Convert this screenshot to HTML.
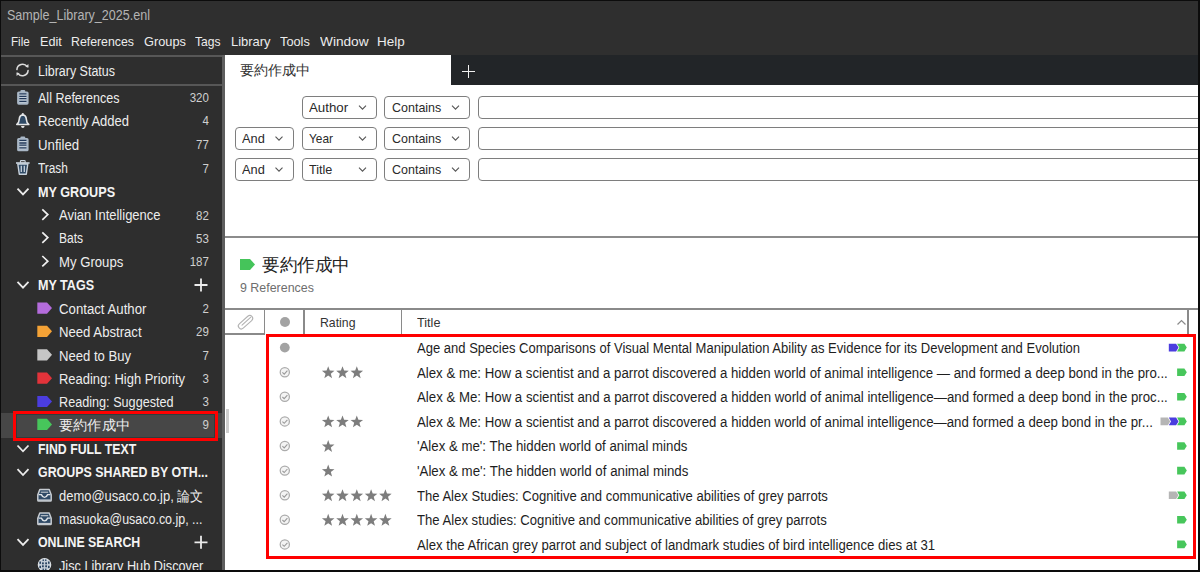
<!DOCTYPE html>
<html><head><meta charset="utf-8">
<style>
html,body{margin:0;padding:0;}
body{width:1200px;height:572px;overflow:hidden;position:relative;background:#0c0c0c;font-family:"Liberation Sans",sans-serif;}
.a{position:absolute;}
.t{position:absolute;white-space:pre;transform-origin:left center;font-family:"Liberation Sans",sans-serif;}
.dd{position:absolute;box-sizing:border-box;border:1.5px solid #7e7e7e;border-radius:4px;background:#fff;height:23px;}
.chev{position:absolute;width:5px;height:5px;border-right:1.2px solid #555;border-bottom:1.2px solid #555;transform:rotate(45deg);}
.tag{position:absolute;}
</style></head><body>
<!-- title + menu -->
<div class="a" style="left:1px;top:1px;width:1197px;height:54px;background:#2f2f2f;"></div>
<!-- sidebar -->
<div class="a" style="left:1px;top:55px;width:224px;height:515px;background:#2e2e2e;"></div>
<div class="a" style="left:1px;top:55px;width:221px;height:2px;background:#575757;"></div>
<div class="a" style="left:1px;top:84px;width:221px;height:2px;background:#575757;"></div>
<div class="a" style="left:222px;top:55px;width:3px;height:515px;background:#5e5e5e;"></div>
<!-- selected row -->
<div class="a" style="left:1px;top:413px;width:221px;height:25px;background:#474747;"></div>
<!-- main panel -->
<div class="a" style="left:225px;top:55px;width:973px;height:515px;background:#fff;"></div>
<div class="a" style="left:451px;top:55px;width:747px;height:29.5px;background:#222528;"></div>
<!-- plus in tab bar -->
<div class="a" style="left:461.8px;top:70.7px;width:13.2px;height:1.6px;background:#f0f0f0;"></div>
<div class="a" style="left:467.6px;top:64.9px;width:1.6px;height:12.8px;background:#f0f0f0;"></div>
<!-- sidebar scroll thumb -->
<div class="a" style="left:226px;top:409px;width:3px;height:24px;background:#cfcfcf;"></div>

<!-- dropdowns -->
<div class="dd" style="left:302px;top:96px;width:75px;"></div>
<div class="dd" style="left:384px;top:96px;width:86px;"></div>
<div class="dd" style="left:478px;top:96px;width:740px;"></div>
<div class="dd" style="left:235px;top:127px;width:59px;"></div>
<div class="dd" style="left:302px;top:127px;width:75px;"></div>
<div class="dd" style="left:384px;top:127px;width:86px;"></div>
<div class="dd" style="left:478px;top:127px;width:740px;"></div>
<div class="dd" style="left:235px;top:158px;width:59px;"></div>
<div class="dd" style="left:302px;top:158px;width:75px;"></div>
<div class="dd" style="left:384px;top:158px;width:86px;"></div>
<div class="dd" style="left:478px;top:158px;width:740px;"></div>

<svg class="a" style="left:0;top:0" width="1200" height="572"><path d="M359.0 105.6L362.5 109.1L366.0 105.6" fill="none" stroke="#555" stroke-width="1.1"/><path d="M452.0 105.6L455.5 109.1L459.0 105.6" fill="none" stroke="#555" stroke-width="1.1"/><path d="M359.0 136.6L362.5 140.1L366.0 136.6" fill="none" stroke="#555" stroke-width="1.1"/><path d="M452.0 136.6L455.5 140.1L459.0 136.6" fill="none" stroke="#555" stroke-width="1.1"/><path d="M275.5 136.6L279 140.1L282.5 136.6" fill="none" stroke="#555" stroke-width="1.1"/><path d="M359.0 167.6L362.5 171.1L366.0 167.6" fill="none" stroke="#555" stroke-width="1.1"/><path d="M452.0 167.6L455.5 171.1L459.0 167.6" fill="none" stroke="#555" stroke-width="1.1"/><path d="M275.5 167.6L279 171.1L282.5 167.6" fill="none" stroke="#555" stroke-width="1.1"/></svg>
<!-- separator -->
<div class="a" style="left:225px;top:236.2px;width:973px;height:2px;background:#8c8c8c;"></div>
<!-- group header tag -->
<svg class="a" style="left:240px;top:259px;" width="15" height="11"><path d="M0 0H10L15 5.5L10 11H0Z" fill="#45c45a"/></svg>

<!-- table header -->
<div class="a" style="left:225px;top:307.9px;width:973px;height:2px;background:#8a8a8a;"></div>
<div class="a" style="left:225px;top:333.2px;width:40px;height:1.6px;background:#8a8a8a;"></div>
<div class="a" style="left:263.6px;top:309px;width:1.8px;height:25px;background:#8a8a8a;"></div>
<div class="a" style="left:303.3px;top:309px;width:1.8px;height:25px;background:#8a8a8a;"></div>
<div class="a" style="left:400.6px;top:309px;width:1.8px;height:25px;background:#8a8a8a;"></div>
<div class="a" style="left:1187.2px;top:309px;width:1.8px;height:25px;background:#8a8a8a;"></div>
<svg class="a" style="left:225px;top:309px;" width="40" height="25" viewBox="225 309 40 25"><g transform="translate(245.5 322.2) rotate(-42)" fill="none" stroke="#b2b2b2" stroke-width="1.1"><rect x="-8.6" y="-2.9" width="17.2" height="5.8" rx="2.9"/><path d="M7 -0.2H-4.5" stroke-linecap="round"/></g></svg>
<div class="a" style="left:279.7px;top:317.3px;width:10px;height:10px;border-radius:50%;background:#a3a3a3;"></div>
<svg class="a" style="left:1176px;top:318px;" width="11" height="8"><path d="M1.5 6.5L5.5 2.5L9.5 6.5" fill="none" stroke="#8a8a8a" stroke-width="1.2"/></svg>

<svg class="a" style="left:225px;top:335px;" width="973" height="235" viewBox="225 335 973 235">
<circle cx="284.8" cy="347.60" r="4.9" fill="#a3a3a3"/>
<path d="M1168.80 343.80H1176.10L1178.50 347.60L1176.10 351.40H1168.80Z" fill="#4b3ddf"/>
<path d="M1177.10 343.80H1184.40L1186.80 347.60L1184.40 351.40H1177.10L1179.30 347.60Z" fill="#47c65b"/>
<circle cx="284.8" cy="372.20" r="4.6" fill="#f4f4f4" stroke="#ababab" stroke-width="1.25"/>
<path d="M282.4 372.40L284.2 374.10L287.4 370.60" fill="none" stroke="#9a9a9a" stroke-width="1.1"/>
<path d="M328.20 366.20L329.82 370.58L334.48 370.76L330.82 373.65L332.08 378.14L328.20 375.55L324.32 378.14L325.58 373.65L321.92 370.76L326.58 370.58Z" fill="#7d7d7d"/>
<path d="M342.50 366.20L344.12 370.58L348.78 370.76L345.12 373.65L346.38 378.14L342.50 375.55L338.62 378.14L339.88 373.65L336.22 370.76L340.88 370.58Z" fill="#7d7d7d"/>
<path d="M356.80 366.20L358.42 370.58L363.08 370.76L359.42 373.65L360.68 378.14L356.80 375.55L352.92 378.14L354.18 373.65L350.52 370.76L355.18 370.58Z" fill="#7d7d7d"/>
<path d="M1177.10 368.40H1184.40L1186.80 372.20L1184.40 376.00H1177.10Z" fill="#47c65b"/>
<circle cx="284.8" cy="396.80" r="4.6" fill="#f4f4f4" stroke="#ababab" stroke-width="1.25"/>
<path d="M282.4 397.00L284.2 398.70L287.4 395.20" fill="none" stroke="#9a9a9a" stroke-width="1.1"/>
<path d="M1177.10 393.00H1184.40L1186.80 396.80L1184.40 400.60H1177.10Z" fill="#47c65b"/>
<circle cx="284.8" cy="421.40" r="4.6" fill="#f4f4f4" stroke="#ababab" stroke-width="1.25"/>
<path d="M282.4 421.60L284.2 423.30L287.4 419.80" fill="none" stroke="#9a9a9a" stroke-width="1.1"/>
<path d="M328.20 415.40L329.82 419.78L334.48 419.96L330.82 422.85L332.08 427.34L328.20 424.75L324.32 427.34L325.58 422.85L321.92 419.96L326.58 419.78Z" fill="#7d7d7d"/>
<path d="M342.50 415.40L344.12 419.78L348.78 419.96L345.12 422.85L346.38 427.34L342.50 424.75L338.62 427.34L339.88 422.85L336.22 419.96L340.88 419.78Z" fill="#7d7d7d"/>
<path d="M356.80 415.40L358.42 419.78L363.08 419.96L359.42 422.85L360.68 427.34L356.80 424.75L352.92 427.34L354.18 422.85L350.52 419.96L355.18 419.78Z" fill="#7d7d7d"/>
<path d="M1160.50 417.60H1167.80L1170.20 421.40L1167.80 425.20H1160.50Z" fill="#b5b5b5"/>
<path d="M1168.80 417.60H1176.10L1178.50 421.40L1176.10 425.20H1168.80L1171.00 421.40Z" fill="#4b3ddf"/>
<path d="M1177.10 417.60H1184.40L1186.80 421.40L1184.40 425.20H1177.10L1179.30 421.40Z" fill="#47c65b"/>
<circle cx="284.8" cy="446.00" r="4.6" fill="#f4f4f4" stroke="#ababab" stroke-width="1.25"/>
<path d="M282.4 446.20L284.2 447.90L287.4 444.40" fill="none" stroke="#9a9a9a" stroke-width="1.1"/>
<path d="M328.20 440.00L329.82 444.38L334.48 444.56L330.82 447.45L332.08 451.94L328.20 449.35L324.32 451.94L325.58 447.45L321.92 444.56L326.58 444.38Z" fill="#7d7d7d"/>
<path d="M1177.10 442.20H1184.40L1186.80 446.00L1184.40 449.80H1177.10Z" fill="#47c65b"/>
<circle cx="284.8" cy="470.60" r="4.6" fill="#f4f4f4" stroke="#ababab" stroke-width="1.25"/>
<path d="M282.4 470.80L284.2 472.50L287.4 469.00" fill="none" stroke="#9a9a9a" stroke-width="1.1"/>
<path d="M328.20 464.60L329.82 468.98L334.48 469.16L330.82 472.05L332.08 476.54L328.20 473.95L324.32 476.54L325.58 472.05L321.92 469.16L326.58 468.98Z" fill="#7d7d7d"/>
<path d="M1177.10 466.80H1184.40L1186.80 470.60L1184.40 474.40H1177.10Z" fill="#47c65b"/>
<circle cx="284.8" cy="495.20" r="4.6" fill="#f4f4f4" stroke="#ababab" stroke-width="1.25"/>
<path d="M282.4 495.40L284.2 497.10L287.4 493.60" fill="none" stroke="#9a9a9a" stroke-width="1.1"/>
<path d="M328.20 489.20L329.82 493.58L334.48 493.76L330.82 496.65L332.08 501.14L328.20 498.55L324.32 501.14L325.58 496.65L321.92 493.76L326.58 493.58Z" fill="#7d7d7d"/>
<path d="M342.50 489.20L344.12 493.58L348.78 493.76L345.12 496.65L346.38 501.14L342.50 498.55L338.62 501.14L339.88 496.65L336.22 493.76L340.88 493.58Z" fill="#7d7d7d"/>
<path d="M356.80 489.20L358.42 493.58L363.08 493.76L359.42 496.65L360.68 501.14L356.80 498.55L352.92 501.14L354.18 496.65L350.52 493.76L355.18 493.58Z" fill="#7d7d7d"/>
<path d="M371.10 489.20L372.72 493.58L377.38 493.76L373.72 496.65L374.98 501.14L371.10 498.55L367.22 501.14L368.48 496.65L364.82 493.76L369.48 493.58Z" fill="#7d7d7d"/>
<path d="M385.40 489.20L387.02 493.58L391.68 493.76L388.02 496.65L389.28 501.14L385.40 498.55L381.52 501.14L382.78 496.65L379.12 493.76L383.78 493.58Z" fill="#7d7d7d"/>
<path d="M1168.80 491.40H1176.10L1178.50 495.20L1176.10 499.00H1168.80Z" fill="#b5b5b5"/>
<path d="M1177.10 491.40H1184.40L1186.80 495.20L1184.40 499.00H1177.10L1179.30 495.20Z" fill="#47c65b"/>
<circle cx="284.8" cy="519.80" r="4.6" fill="#f4f4f4" stroke="#ababab" stroke-width="1.25"/>
<path d="M282.4 520.00L284.2 521.70L287.4 518.20" fill="none" stroke="#9a9a9a" stroke-width="1.1"/>
<path d="M328.20 513.80L329.82 518.18L334.48 518.36L330.82 521.25L332.08 525.74L328.20 523.15L324.32 525.74L325.58 521.25L321.92 518.36L326.58 518.18Z" fill="#7d7d7d"/>
<path d="M342.50 513.80L344.12 518.18L348.78 518.36L345.12 521.25L346.38 525.74L342.50 523.15L338.62 525.74L339.88 521.25L336.22 518.36L340.88 518.18Z" fill="#7d7d7d"/>
<path d="M356.80 513.80L358.42 518.18L363.08 518.36L359.42 521.25L360.68 525.74L356.80 523.15L352.92 525.74L354.18 521.25L350.52 518.36L355.18 518.18Z" fill="#7d7d7d"/>
<path d="M371.10 513.80L372.72 518.18L377.38 518.36L373.72 521.25L374.98 525.74L371.10 523.15L367.22 525.74L368.48 521.25L364.82 518.36L369.48 518.18Z" fill="#7d7d7d"/>
<path d="M385.40 513.80L387.02 518.18L391.68 518.36L388.02 521.25L389.28 525.74L385.40 523.15L381.52 525.74L382.78 521.25L379.12 518.36L383.78 518.18Z" fill="#7d7d7d"/>
<path d="M1177.10 516.00H1184.40L1186.80 519.80L1184.40 523.60H1177.10Z" fill="#47c65b"/>
<circle cx="284.8" cy="544.40" r="4.6" fill="#f4f4f4" stroke="#ababab" stroke-width="1.25"/>
<path d="M282.4 544.60L284.2 546.30L287.4 542.80" fill="none" stroke="#9a9a9a" stroke-width="1.1"/>
<path d="M1177.10 540.60H1184.40L1186.80 544.40L1184.40 548.20H1177.10Z" fill="#47c65b"/>
</svg>

<svg class="a" style="left:0px;top:55px;" width="225" height="515" viewBox="0 55 225 515">
<g fill="none" stroke="#dcdcdc" stroke-width="1.5" stroke-linecap="round"><path d="M16.9 69.6 A5.7 5.7 0 0 1 27.2 66.6"/><path d="M28.1 70.4 A5.7 5.7 0 0 1 17.8 73.4"/></g><path d="M25.3 66.8 L28.6 67.6 L28.4 63.9 Z" fill="#dcdcdc"/><path d="M19.7 73.2 L16.4 72.4 L16.6 76.1 Z" fill="#dcdcdc"/>
<rect x="17.1" y="91.5" width="11.5" height="13.2" rx="1.6" fill="#a9b7c6"/><rect x="20.3" y="90.0" width="5" height="3" rx="1.2" fill="#a9b7c6"/><rect x="19.3" y="93.2" width="7.2" height="9.5" fill="#c3ced9"/><path d="M19.3 93.8H26.5M19.3 96.4H26.5M19.3 98.6H26.5M19.3 101.3H26.5" stroke="#23395a" stroke-width="1.3"/>
<rect x="17.1" y="138.1" width="11.5" height="13.2" rx="1.6" fill="#a9b7c6"/><rect x="20.3" y="136.6" width="5" height="3" rx="1.2" fill="#a9b7c6"/><rect x="19.3" y="139.8" width="7.2" height="9.5" fill="#c3ced9"/><path d="M19.3 140.4H26.5M19.3 143.0H26.5M19.3 145.2H26.5M19.3 147.9H26.5" stroke="#23395a" stroke-width="1.3"/>
<path d="M16.8 124.5Q19 123.1 19.2 119.5Q19.6 115.1 22.8 114.9Q26 115.1 26.4 119.5Q26.6 123.1 28.8 124.5Z" fill="#2f4a66" stroke="#e4e6e8" stroke-width="1.6" stroke-linejoin="round"/><path d="M21 125.9H24.6Q24.4 127.9 22.8 127.9Q21.2 127.9 21 125.9Z" fill="#e4e6e8"/><circle cx="22.8" cy="114.0" r="1.1" fill="#e4e6e8"/>
<path d="M17.8 164.0L19.3 174.2H26.3L27.8 164.0Z" fill="#2f4a66" stroke="#c9d3dd" stroke-width="1.4" stroke-linejoin="round"/><path d="M16 163.0H29.6" stroke="#c9d3dd" stroke-width="1.6"/><rect x="20.4" y="160.6" width="4.8" height="2.4" rx="0.8" fill="none" stroke="#c9d3dd" stroke-width="1.1"/><path d="M21.3 165.8V172.0M24.3 165.8V172.0" stroke="#c9d3dd" stroke-width="1.3"/>
<path d="M17.5 188.6L23 194.4L28.5 188.6" fill="none" stroke="#ececec" stroke-width="1.8"/>
<path d="M17.5 281.8L23 287.6L28.5 281.8" fill="none" stroke="#ececec" stroke-width="1.8"/>
<path d="M17.5 445.5L23 451.3L28.5 445.5" fill="none" stroke="#ececec" stroke-width="1.8"/>
<path d="M17.5 469.2L23 475.0L28.5 469.2" fill="none" stroke="#ececec" stroke-width="1.8"/>
<path d="M17.5 539.1L23 544.9L28.5 539.1" fill="none" stroke="#ececec" stroke-width="1.8"/>
<path d="M42.3 209.4L47.8 214.6L42.3 219.8" fill="none" stroke="#f0f0f0" stroke-width="1.7"/>
<path d="M42.3 232.4L47.8 237.6L42.3 242.8" fill="none" stroke="#f0f0f0" stroke-width="1.7"/>
<path d="M42.3 256.0L47.8 261.2L42.3 266.4" fill="none" stroke="#f0f0f0" stroke-width="1.7"/>
<path d="M194.5 285.0H207.5M201 278.5V291.5" stroke="#ececec" stroke-width="1.8"/>
<path d="M194.5 542.3H207.5M201 535.8V548.8" stroke="#ececec" stroke-width="1.8"/>
<path d="M37.3 302.5H47L52 308.1L47 313.7H37.3Z" fill="#b46cdc"/>
<path d="M37.3 325.7H47L52 331.3L47 336.9H37.3Z" fill="#f4a236"/>
<path d="M37.3 349.2H47L52 354.8L47 360.4H37.3Z" fill="#c6c6c6"/>
<path d="M37.3 372.6H47L52 378.2L47 383.8H37.3Z" fill="#e2333a"/>
<path d="M37.3 395.9H47L52 401.5L47 407.1H37.3Z" fill="#4b3ddf"/>
<path d="M37.3 418.8H47L52 424.4L47 430.0H37.3Z" fill="#47c65b"/>
<path d="M37.8 494.7L39.8 489.6H49.2L51.2 494.7V500.2Q51.2 501.0 50.4 501.0H38.6Q37.8 501.0 37.8 500.2Z" fill="#2f4a66" stroke="#c6cbd1" stroke-width="1.5" stroke-linejoin="round"/><path d="M38.6 494.6H41.4Q42.6 497.4 44.5 497.4Q46.4 497.4 47.6 494.6H50.4" fill="none" stroke="#dfe3e7" stroke-width="1.4"/><path d="M40.8 492.2H48.2" stroke="#c6cbd1" stroke-width="1.1"/><path d="M38.2 500.1H50.8" stroke="#c6cbd1" stroke-width="1.4"/>
<path d="M37.8 518.2L39.8 513.1H49.2L51.2 518.2V523.7Q51.2 524.5 50.4 524.5H38.6Q37.8 524.5 37.8 523.7Z" fill="#2f4a66" stroke="#c6cbd1" stroke-width="1.5" stroke-linejoin="round"/><path d="M38.6 518.1H41.4Q42.6 520.9 44.5 520.9Q46.4 520.9 47.6 518.1H50.4" fill="none" stroke="#dfe3e7" stroke-width="1.4"/><path d="M40.8 515.7H48.2" stroke="#c6cbd1" stroke-width="1.1"/><path d="M38.2 523.6H50.8" stroke="#c6cbd1" stroke-width="1.4"/>
<circle cx="44.5" cy="564.8" r="6.2" fill="#c3ccd6" stroke="#dde2e6" stroke-width="1.2"/><g fill="#2a4462"><rect x="39.4" y="561.5" width="1.6" height="2.3"/><rect x="39.4" y="565.8" width="1.6" height="2.3"/><rect x="48" y="561.5" width="1.6" height="2.3"/><rect x="48" y="565.8" width="1.6" height="2.3"/><rect x="42" y="562.4" width="1.8" height="1.9"/><rect x="45.2" y="562.4" width="1.8" height="1.9"/><rect x="42" y="565.3" width="1.8" height="1.9"/><rect x="45.2" y="565.3" width="1.8" height="1.9"/><rect x="42.6" y="559.4" width="1.3" height="1.6"/><rect x="45.1" y="559.4" width="1.3" height="1.6"/><rect x="42.6" y="568.6" width="1.3" height="1.6"/><rect x="45.1" y="568.6" width="1.3" height="1.6"/></g>
</svg>

<!-- red highlight boxes -->
<div class="a" style="left:13px;top:411px;width:205px;height:30px;box-sizing:border-box;border:3.5px solid #ff0000;box-shadow:inset 0 0 0 1px #2e3d3d;"></div>
<div class="a" style="left:266px;top:334px;width:930px;height:225px;box-sizing:border-box;border:3.3px solid #ff0000;"></div>

<div class="t" style="left:7.30px;top:8.00px;font-size:14px;line-height:14px;color:#b4b4b4;transform:scaleX(0.8962);">Sample_Library_2025.enl</div>
<div class="t" style="left:11.20px;top:35.20px;font-size:13px;line-height:13px;color:#ececec;transform:scaleX(0.8972);">File</div>
<div class="t" style="left:39.50px;top:35.20px;font-size:13px;line-height:13px;color:#ececec;transform:scaleX(0.9729);">Edit</div>
<div class="t" style="left:71.00px;top:35.20px;font-size:13px;line-height:13px;color:#ececec;transform:scaleX(0.9476);">References</div>
<div class="t" style="left:143.50px;top:35.20px;font-size:13px;line-height:13px;color:#ececec;transform:scaleX(0.9850);">Groups</div>
<div class="t" style="left:195.00px;top:35.20px;font-size:13px;line-height:13px;color:#ececec;transform:scaleX(0.9283);">Tags</div>
<div class="t" style="left:231.00px;top:35.20px;font-size:13px;line-height:13px;color:#ececec;transform:scaleX(0.9962);">Library</div>
<div class="t" style="left:280.00px;top:35.20px;font-size:13px;line-height:13px;color:#ececec;transform:scaleX(0.9816);">Tools</div>
<div class="t" style="left:319.60px;top:35.20px;font-size:13px;line-height:13px;color:#ececec;transform:scaleX(1.0508);">Window</div>
<div class="t" style="left:377.30px;top:35.20px;font-size:13px;line-height:13px;color:#ececec;transform:scaleX(1.0355);">Help</div>
<div class="t" style="left:37.50px;top:64.00px;font-size:14px;line-height:14px;color:#ededed;transform:scaleX(0.8915);">Library Status</div>
<div class="t" style="left:37.50px;top:91.00px;font-size:14px;line-height:14px;color:#ededed;transform:scaleX(0.8940);">All References</div>
<div class="t" style="left:188.44px;top:92.15px;font-size:12.5px;line-height:12.5px;color:#d0d0d0;transform:scaleX(0.9200);transform-origin:right center;">320</div>
<div class="t" style="left:37.50px;top:114.30px;font-size:14px;line-height:14px;color:#ededed;transform:scaleX(0.9278);">Recently Added</div>
<div class="t" style="left:202.35px;top:115.45px;font-size:12.5px;line-height:12.5px;color:#d0d0d0;transform:scaleX(0.9200);transform-origin:right center;">4</div>
<div class="t" style="left:37.50px;top:137.60px;font-size:14px;line-height:14px;color:#ededed;transform:scaleX(0.9451);">Unfiled</div>
<div class="t" style="left:195.39px;top:138.75px;font-size:12.5px;line-height:12.5px;color:#d0d0d0;transform:scaleX(0.9200);transform-origin:right center;">77</div>
<div class="t" style="left:37.50px;top:161.40px;font-size:14px;line-height:14px;color:#ededed;transform:scaleX(0.8475);">Trash</div>
<div class="t" style="left:202.35px;top:162.55px;font-size:12.5px;line-height:12.5px;color:#d0d0d0;transform:scaleX(0.9200);transform-origin:right center;">7</div>
<div class="t" style="left:37.50px;top:184.80px;font-size:14px;line-height:14px;color:#f4f4f4;transform:scaleX(0.9037);font-weight:bold;">MY GROUPS</div>
<div class="t" style="left:37.50px;top:278.00px;font-size:14px;line-height:14px;color:#f4f4f4;transform:scaleX(0.8976);font-weight:bold;">MY TAGS</div>
<div class="t" style="left:37.50px;top:441.70px;font-size:14px;line-height:14px;color:#f4f4f4;transform:scaleX(0.8798);font-weight:bold;">FIND FULL TEXT</div>
<div class="t" style="left:37.50px;top:465.40px;font-size:14px;line-height:14px;color:#f4f4f4;transform:scaleX(0.8859);font-weight:bold;">GROUPS SHARED BY OTH...</div>
<div class="t" style="left:37.50px;top:535.30px;font-size:14px;line-height:14px;color:#f4f4f4;transform:scaleX(0.8826);font-weight:bold;">ONLINE SEARCH</div>
<div class="t" style="left:59.00px;top:208.40px;font-size:14px;line-height:14px;color:#ededed;transform:scaleX(0.9271);">Avian Intelligence</div>
<div class="t" style="left:195.39px;top:209.55px;font-size:12.5px;line-height:12.5px;color:#d0d0d0;transform:scaleX(0.9200);transform-origin:right center;">82</div>
<div class="t" style="left:59.00px;top:231.40px;font-size:14px;line-height:14px;color:#ededed;transform:scaleX(0.8602);">Bats</div>
<div class="t" style="left:195.39px;top:232.55px;font-size:12.5px;line-height:12.5px;color:#d0d0d0;transform:scaleX(0.9200);transform-origin:right center;">53</div>
<div class="t" style="left:59.00px;top:255.00px;font-size:14px;line-height:14px;color:#ededed;transform:scaleX(0.9391);">My Groups</div>
<div class="t" style="left:188.44px;top:256.15px;font-size:12.5px;line-height:12.5px;color:#d0d0d0;transform:scaleX(0.9200);transform-origin:right center;">187</div>
<div class="t" style="left:59.00px;top:301.90px;font-size:14px;line-height:14px;color:#ededed;transform:scaleX(0.9436);">Contact Author</div>
<div class="t" style="left:202.35px;top:303.05px;font-size:12.5px;line-height:12.5px;color:#d0d0d0;transform:scaleX(0.9200);transform-origin:right center;">2</div>
<div class="t" style="left:59.00px;top:325.10px;font-size:14px;line-height:14px;color:#ededed;transform:scaleX(0.9393);">Need Abstract</div>
<div class="t" style="left:195.39px;top:326.25px;font-size:12.5px;line-height:12.5px;color:#d0d0d0;transform:scaleX(0.9200);transform-origin:right center;">29</div>
<div class="t" style="left:59.00px;top:348.60px;font-size:14px;line-height:14px;color:#ededed;transform:scaleX(0.9356);">Need to Buy</div>
<div class="t" style="left:202.35px;top:349.75px;font-size:12.5px;line-height:12.5px;color:#d0d0d0;transform:scaleX(0.9200);transform-origin:right center;">7</div>
<div class="t" style="left:59.00px;top:372.00px;font-size:14px;line-height:14px;color:#ededed;transform:scaleX(0.9253);">Reading: High Priority</div>
<div class="t" style="left:202.35px;top:373.15px;font-size:12.5px;line-height:12.5px;color:#d0d0d0;transform:scaleX(0.9200);transform-origin:right center;">3</div>
<div class="t" style="left:59.00px;top:395.30px;font-size:14px;line-height:14px;color:#ededed;transform:scaleX(0.9033);">Reading: Suggested</div>
<div class="t" style="left:202.35px;top:396.45px;font-size:12.5px;line-height:12.5px;color:#d0d0d0;transform:scaleX(0.9200);transform-origin:right center;">3</div>
<div class="t" style="left:59.00px;top:418.20px;font-size:14px;line-height:14px;color:#ededed;transform:scaleX(1.0143);">要約作成中</div>
<div class="t" style="left:202.35px;top:419.35px;font-size:12.5px;line-height:12.5px;color:#d0d0d0;transform:scaleX(0.9200);transform-origin:right center;">9</div>
<div class="t" style="left:59.00px;top:489.00px;font-size:14px;line-height:14px;color:#ededed;transform:scaleX(0.9259);">demo@usaco.co.jp, 論文</div>
<div class="t" style="left:59.00px;top:512.40px;font-size:14px;line-height:14px;color:#ededed;transform:scaleX(0.8897);">masuoka@usaco.co.jp, ...</div>
<div class="t" style="left:59.00px;top:558.50px;font-size:14px;line-height:14px;color:#ededed;transform:scaleX(0.9092);">Jisc Library Hub Discover</div>
<div class="t" style="left:240.00px;top:62.80px;font-size:14px;line-height:14px;color:#333;transform:scaleX(1.0071);">要約作成中</div>
<div class="t" style="left:308.70px;top:100.75px;font-size:13.5px;line-height:13.5px;color:#2a2a2a;transform:scaleX(0.9854);">Author</div>
<div class="t" style="left:391.70px;top:100.75px;font-size:13.5px;line-height:13.5px;color:#2a2a2a;transform:scaleX(0.9250);">Contains</div>
<div class="t" style="left:308.70px;top:131.75px;font-size:13.5px;line-height:13.5px;color:#2a2a2a;transform:scaleX(0.8797);">Year</div>
<div class="t" style="left:391.70px;top:131.75px;font-size:13.5px;line-height:13.5px;color:#2a2a2a;transform:scaleX(0.9250);">Contains</div>
<div class="t" style="left:241.70px;top:131.75px;font-size:13.5px;line-height:13.5px;color:#2a2a2a;transform:scaleX(0.9488);">And</div>
<div class="t" style="left:308.70px;top:162.75px;font-size:13.5px;line-height:13.5px;color:#2a2a2a;transform:scaleX(0.9354);">Title</div>
<div class="t" style="left:391.70px;top:162.75px;font-size:13.5px;line-height:13.5px;color:#2a2a2a;transform:scaleX(0.9250);">Contains</div>
<div class="t" style="left:241.70px;top:162.75px;font-size:13.5px;line-height:13.5px;color:#2a2a2a;transform:scaleX(0.9488);">And</div>
<div class="t" style="left:261.60px;top:256.00px;font-size:18px;line-height:18px;color:#222;transform:scaleX(0.9778);">要約作成中</div>
<div class="t" style="left:240.00px;top:280.50px;font-size:13px;line-height:13px;color:#6e6e6e;transform:scaleX(0.9557);">9 References</div>
<div class="t" style="left:319.70px;top:315.75px;font-size:13.5px;line-height:13.5px;color:#333;transform:scaleX(0.9095);">Rating</div>
<div class="t" style="left:417.00px;top:315.75px;font-size:13.5px;line-height:13.5px;color:#333;transform:scaleX(0.9394);">Title</div>
<div class="t" style="left:416.90px;top:341.00px;font-size:14px;line-height:14px;color:#1e1e1e;transform:scaleX(0.9305);">Age and Species Comparisons of Visual Mental Manipulation Ability as Evidence for its Development and Evolution</div>
<div class="t" style="left:416.90px;top:365.60px;font-size:14px;line-height:14px;color:#1e1e1e;transform:scaleX(0.9449);">Alex &amp; me: How a scientist and a parrot discovered a hidden world of animal intelligence — and formed a deep bond in the pro...</div>
<div class="t" style="left:416.90px;top:390.20px;font-size:14px;line-height:14px;color:#1e1e1e;transform:scaleX(0.9458);">Alex &amp; Me: How a scientist and a parrot discovered a hidden world of animal intelligence—and formed a deep bond in the proc...</div>
<div class="t" style="left:416.90px;top:414.80px;font-size:14px;line-height:14px;color:#1e1e1e;transform:scaleX(0.9455);">Alex &amp; Me: How a scientist and a parrot discovered a hidden world of animal intelligence—and formed a deep bond in the pr...</div>
<div class="t" style="left:416.90px;top:439.40px;font-size:14px;line-height:14px;color:#1e1e1e;transform:scaleX(0.9454);">&#x27;Alex &amp; me&#x27;: The hidden world of animal minds</div>
<div class="t" style="left:416.90px;top:464.00px;font-size:14px;line-height:14px;color:#1e1e1e;transform:scaleX(0.9489);">&#x27;Alex &amp; me&#x27;: The hidden world of animal minds</div>
<div class="t" style="left:416.90px;top:488.60px;font-size:14px;line-height:14px;color:#1e1e1e;transform:scaleX(0.9327);">The Alex Studies: Cognitive and communicative abilities of grey parrots</div>
<div class="t" style="left:416.90px;top:513.20px;font-size:14px;line-height:14px;color:#1e1e1e;transform:scaleX(0.9354);">The Alex studies: Cognitive and communicative abilities of grey parrots</div>
<div class="t" style="left:416.90px;top:537.80px;font-size:14px;line-height:14px;color:#1e1e1e;transform:scaleX(0.9403);">Alex the African grey parrot and subject of landmark studies of bird intelligence dies at 31</div>
<div class="a" style="left:1198px;top:0;width:2px;height:572px;background:#0c0c0c;"></div>
<div class="a" style="left:0;top:570px;width:1200px;height:2px;background:#0c0c0c;"></div>
<div class="a" style="left:0;top:0;width:1200px;height:1px;background:#0c0c0c;"></div>
<div class="a" style="left:0;top:0;width:1px;height:572px;background:#0c0c0c;"></div>
</body></html>
